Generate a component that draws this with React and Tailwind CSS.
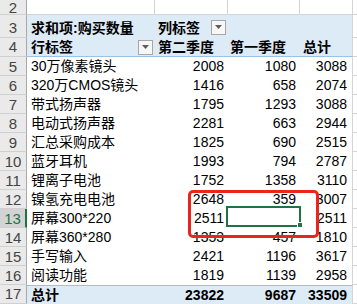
import React from "react";

const data = [
  [5, "30万像素镜头", 2008, 1080, 3088],
  [6, "320万CMOS镜头", 1416, 658, 2074],
  [7, "带式扬声器", 1795, 1293, 3088],
  [8, "电动式扬声器", 2281, 663, 2944],
  [9, "汇总采购成本", 1825, 690, 2515],
  [10, "蓝牙耳机", 1993, 794, 2787],
  [11, "锂离子电池", 1752, 1358, 3110],
  [12, "镍氢充电电池", 2648, 359, 3007],
  [13, "屏幕300*220", 2511, "", 2511],
  [14, "屏幕360*280", 1353, 457, 1810],
  [15, "手写输入", 2421, 1196, 3617],
  [16, "阅读功能", 1819, 1139, 2958],
];

const Dropdown = () => (
  <div className="w-[15px] h-[15px] shrink-0 border border-[#a6a6a6] bg-[#f7f7f7] flex items-center justify-center">
    <svg width="7" height="4" viewBox="0 0 7 4">
      <path d="M0 0 L7 0 L3.5 4 Z" fill="#5f5f5f" />
    </svg>
  </div>
);

const RowHead = ({ n, selected, className = "" }) => (
  <div
    className={
      "w-[27px] shrink-0 flex justify-center border-b border-[#d0d0d0] text-[15px] " +
      (selected
        ? "bg-[#d3d3d3] text-[#217346] border-r-2 border-r-[#217346] "
        : "bg-[#eaeaea] text-[#444] border-r border-r-[#a8a8a8] ") +
      className
    }
  >
    {n}
  </div>
);

export default function App() {
  return (
    <div className="relative w-[357px] h-[304px] overflow-hidden bg-white text-black text-[14px] font-['Liberation_Sans','Noto_Sans_CJK_SC',sans-serif]">
      {/* row 2 */}
      <div className="flex h-[15px]">
        <RowHead n="2" className="items-end leading-[13px]" />
        <div className="w-[128px] border-r border-b border-[#d4d4d4]" />
        <div className="w-[73px] border-r border-b border-[#d4d4d4]" />
        <div className="w-[72px] border-r border-b border-[#d4d4d4]" />
        <div className="w-[53px] border-r border-b border-[#d4d4d4]" />
        <div className="flex-1 border-b border-[#d4d4d4]" />
      </div>

      {/* row 3 */}
      <div className="flex h-[23px] leading-[19px]">
        <RowHead n="3" className="items-end" />
        <div className="w-[128px] bg-[#ddebf7] flex items-end pl-[4px] font-bold whitespace-nowrap">
          求和项:购买数量
        </div>
        <div className="w-[73px] bg-[#ddebf7] flex items-center justify-between pl-[3px] pr-[2px] pt-[1px] font-bold whitespace-nowrap">
          <span className="self-end">列标签</span>
          <Dropdown />
        </div>
        <div className="w-[72px] bg-[#ddebf7]" />
        <div className="w-[53px] bg-[#ddebf7] border-r border-[#d4d4d4]" />
        <div className="flex-1 border-b border-[#d4d4d4]" />
      </div>

      {/* row 4 */}
      <div className="flex h-[19px] leading-[18px]">
        <RowHead n="4" className="items-center" />
        <div className="w-[128px] bg-[#ddebf7] border-b border-[#9bc2e6] flex items-center justify-between pl-[4px] pr-[2px] font-bold">
          <span>行标签</span>
          <Dropdown />
        </div>
        <div className="w-[73px] bg-[#ddebf7] border-b border-[#9bc2e6] flex items-center pl-[3px] font-bold">
          第二季度
        </div>
        <div className="w-[72px] bg-[#ddebf7] border-b border-[#9bc2e6] flex items-center pl-[2px] font-bold">
          第一季度
        </div>
        <div className="w-[53px] bg-[#ddebf7] border-b border-b-[#9bc2e6] border-r border-r-[#d4d4d4] flex items-center pl-[3px] font-bold">
          总计
        </div>
        <div className="flex-1 border-b border-[#d4d4d4]" />
      </div>

      {/* data rows */}
      {data.map(([n, label, b, c, d]) => (
        <div key={n} className="flex h-[19px] leading-[19px]">
          <RowHead n={n} selected={n === 13} className="items-center" />
          <div className="w-[128px] pl-[4px] whitespace-nowrap">{label}</div>
          <div className="w-[73px] pr-[4px] text-right">{b}</div>
          <div className="w-[72px] pr-[4px] text-right">{c}</div>
          <div className="w-[53px] pr-[5px] text-right border-r border-[#d4d4d4]">{d}</div>
          <div className="flex-1 border-b border-[#d4d4d4]" />
        </div>
      ))}

      {/* total row */}
      <div className="flex h-[19px] leading-[18px] font-bold">
        <RowHead n="17" className="items-center font-normal" />
        <div className="w-[128px] pl-[4px] bg-[#ddebf7] border-t border-[#9bc2e6]">总计</div>
        <div className="w-[73px] pr-[4px] text-right bg-[#ddebf7] border-t border-[#9bc2e6]">23822</div>
        <div className="w-[72px] pr-[4px] text-right bg-[#ddebf7] border-t border-[#9bc2e6]">9687</div>
        <div className="w-[53px] pr-[5px] text-right bg-[#ddebf7] border-t border-t-[#9bc2e6] border-r border-r-[#d4d4d4]">33509</div>
        <div className="flex-1 border-b border-[#d4d4d4]" />
      </div>

      {/* selected cell C13 */}
      <div className="absolute left-[226px] top-[206px] w-[75px] h-[21px] border-2 border-[#217346]" />
      <div className="absolute left-[297px] top-[222px] w-[6px] h-[6px] bg-[#217346] border border-white" />

      {/* red highlight */}
      <div className="absolute left-[188px] top-[190px] w-[131px] h-[48px] border-[3px] border-[#e8261d] rounded-[5px]" />
    </div>
  );
}
